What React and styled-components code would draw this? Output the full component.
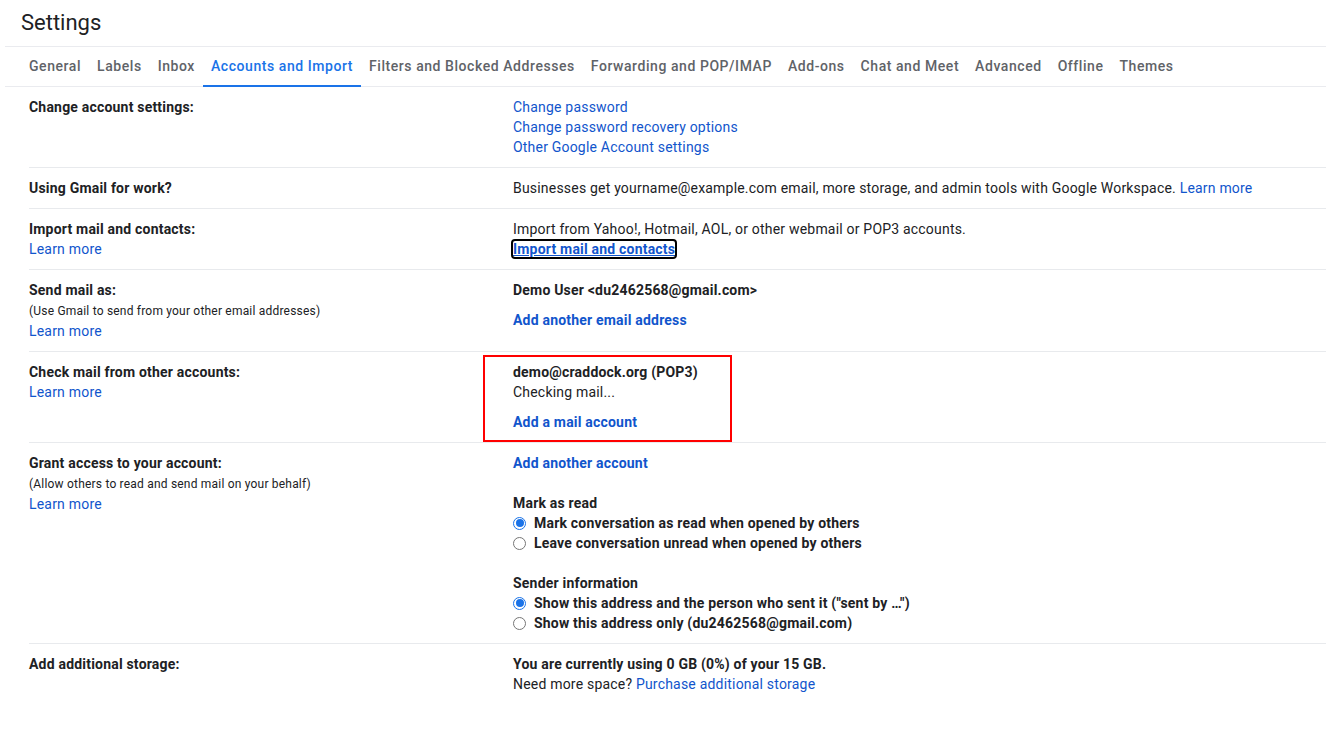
import React from 'react'
import styled, { createGlobalStyle } from 'styled-components'

const GlobalStyle = createGlobalStyle`
  body {
    margin: 0;
    background: #fff;
    font-family: Roboto, "Liberation Sans", Arial, sans-serif;
    color: #202124;
    letter-spacing: 0.2px;
  }
`

const Page = styled.div`
  width: 1326px;
  height: 741px;
  overflow: hidden;
  background: #fff;
`

const Header = styled.div`
  margin-left: 5px;
  border-bottom: 1px solid #eaebef;
`

const Title = styled.h1`
  margin: 0;
  height: 46px;
  padding: 0 0 0 16px;
  font-size: 22px;
  font-weight: 400;
  line-height: 46px;
  letter-spacing: 0;
  color: #202124;
`

const Tabs = styled.nav`
  display: flex;
  height: 40px;
  padding-left: 16px;
  border-top: 1px solid #eaebef;
  box-sizing: border-box;
`

const Tab = styled.a`
  display: flex;
  align-items: center;
  padding: 0 8px;
  margin-bottom: -1px;
  font-size: 14px;
  font-weight: 500;
  letter-spacing: 0.56px;
  color: ${p => (p.$active ? '#1a73e8' : '#5f6368')};
  border-bottom: 2px solid ${p => (p.$active ? '#1a73e8' : 'transparent')};
  cursor: pointer;
`

const Table = styled.div`
  padding-left: 29px;
`

const Row = styled.div`
  display: grid;
  grid-template-columns: 484px 1fr;
  padding: 10px 0;
  border-top: ${p => (p.$first ? 'none' : '1px solid #e8eaed')};
  font-size: 14px;
  line-height: 20px;
`

const Label = styled.div`
  display: flex;
  flex-direction: column;
`

const LabelTitle = styled.span`
  font-weight: 700;
`

const Note = styled.span`
  font-size: 12px;
  line-height: 20px;
  padding-top: 1px;
`

const Value = styled.div`
  position: relative;
  display: flex;
  flex-direction: column;
  align-items: flex-start;
`

const Link = styled.a`
  color: #1155cc;
  font-weight: ${p => (p.$bold ? 700 : 400)};
  text-decoration: none;
  cursor: pointer;
  margin-top: ${p => p.$gap || 0}px;
`

const FocusLink = styled(Link)`
  text-decoration: underline;
  outline: 2px solid #000;
  outline-offset: 0;
  border-radius: 2px;
  line-height: 16px;
  margin: 2px 0 2px 0;
`

const Bold = styled.span`
  font-weight: 700;
  margin-top: ${p => p.$gap || 0}px;
`

const Highlight = styled.div`
  position: absolute;
  left: -30px;
  top: -7px;
  width: 249px;
  height: 87px;
  border: 2px solid #ff0000;
  box-sizing: border-box;
  pointer-events: none;
`

const RadioRow = styled.label`
  display: flex;
  align-items: center;
  font-weight: 700;
`

const Radio = styled.span`
  width: 13px;
  height: 13px;
  margin: 0 8px 0 0;
  border-radius: 50%;
  box-sizing: border-box;
  border: 1px solid ${p => (p.$on ? '#1a73e8' : '#767676')};
  display: flex;
  align-items: center;
  justify-content: center;
  &::after {
    content: '';
    width: 8px;
    height: 8px;
    border-radius: 50%;
    background: ${p => (p.$on ? '#1a73e8' : 'transparent')};
  }
`

const tabs = [
  'General',
  'Labels',
  'Inbox',
  'Accounts and Import',
  'Filters and Blocked Addresses',
  'Forwarding and POP/IMAP',
  'Add-ons',
  'Chat and Meet',
  'Advanced',
  'Offline',
  'Themes',
]

export default function App() {
  return (
    <Page>
      <GlobalStyle />
      <Header>
        <Title>Settings</Title>
        <Tabs>
          {tabs.map(t => (
            <Tab key={t} $active={t === 'Accounts and Import'}>{t}</Tab>
          ))}
        </Tabs>
      </Header>

      <Table>
        <Row $first>
          <Label><LabelTitle>Change account settings:</LabelTitle></Label>
          <Value>
            <Link>Change password</Link>
            <Link>Change password recovery options</Link>
            <Link>Other Google Account settings</Link>
          </Value>
        </Row>

        <Row>
          <Label><LabelTitle>Using Gmail for work?</LabelTitle></Label>
          <Value>
            <span>
              Businesses get yourname@example.com email, more storage, and admin tools with Google Workspace.{' '}
              <Link>Learn more</Link>
            </span>
          </Value>
        </Row>

        <Row>
          <Label>
            <LabelTitle>Import mail and contacts:</LabelTitle>
            <Link>Learn more</Link>
          </Label>
          <Value>
            <span>Import from Yahoo!, Hotmail, AOL, or other webmail or POP3 accounts.</span>
            <FocusLink $bold>Import mail and contacts</FocusLink>
          </Value>
        </Row>

        <Row>
          <Label>
            <LabelTitle>Send mail as:</LabelTitle>
            <Note>(Use Gmail to send from your other email addresses)</Note>
            <Link>Learn more</Link>
          </Label>
          <Value>
            <Bold>Demo User &lt;du2462568@gmail.com&gt;</Bold>
            <Link $bold $gap={10}>Add another email address</Link>
          </Value>
        </Row>

        <Row>
          <Label>
            <LabelTitle>Check mail from other accounts:</LabelTitle>
            <Link>Learn more</Link>
          </Label>
          <Value>
            <Highlight />
            <Bold>demo@craddock.org (POP3)</Bold>
            <span>Checking mail...</span>
            <Link $bold $gap={10}>Add a mail account</Link>
          </Value>
        </Row>

        <Row>
          <Label>
            <LabelTitle>Grant access to your account:</LabelTitle>
            <Note>(Allow others to read and send mail on your behalf)</Note>
            <Link>Learn more</Link>
          </Label>
          <Value>
            <Link $bold>Add another account</Link>
            <Bold $gap={20}>Mark as read</Bold>
            <RadioRow><Radio $on />Mark conversation as read when opened by others</RadioRow>
            <RadioRow><Radio />Leave conversation unread when opened by others</RadioRow>
            <Bold $gap={20}>Sender information</Bold>
            <RadioRow><Radio $on />Show this address and the person who sent it ("sent by …")</RadioRow>
            <RadioRow><Radio />Show this address only (du2462568@gmail.com)</RadioRow>
          </Value>
        </Row>

        <Row>
          <Label><LabelTitle>Add additional storage:</LabelTitle></Label>
          <Value>
            <Bold>You are currently using 0 GB (0%) of your 15 GB.</Bold>
            <span>
              Need more space? <Link>Purchase additional storage</Link>
            </span>
          </Value>
        </Row>
      </Table>
    </Page>
  )
}
